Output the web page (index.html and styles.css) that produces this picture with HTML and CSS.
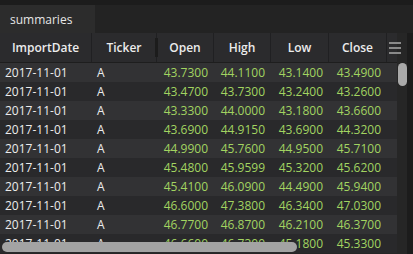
FILE: index.html
```html
<!DOCTYPE html>
<html lang="en">
<head>
    <meta charset="UTF-8">
    <title>summaries</title>
    <link rel="stylesheet" href="styles.css">
</head>
<body>
    <div class="app">
        <div class="tabbar">
            <div class="tab">summaries</div>
        </div>

        <div class="grid">
            <div class="row head">
                <div class="cell">ImportDate</div>
                <div class="cell">Ticker<span class="grip"></span></div>
                <div class="cell">Open</div>
                <div class="cell">High</div>
                <div class="cell">Low</div>
                <div class="cell">Close</div>
                <div class="menu"><span></span><span></span><span></span></div>
            </div>

            <div class="body">
                <div class="row"><div class="cell">2017-11-01</div><div class="cell">A</div><div class="cell num">43.7300</div><div class="cell num">44.1100</div><div class="cell num">43.1400</div><div class="cell num">43.4900</div></div>
                <div class="row"><div class="cell">2017-11-01</div><div class="cell">A</div><div class="cell num">43.4700</div><div class="cell num">43.7300</div><div class="cell num">43.2400</div><div class="cell num">43.2600</div></div>
                <div class="row"><div class="cell">2017-11-01</div><div class="cell">A</div><div class="cell num">43.3300</div><div class="cell num">44.0000</div><div class="cell num">43.1800</div><div class="cell num">43.6600</div></div>
                <div class="row"><div class="cell">2017-11-01</div><div class="cell">A</div><div class="cell num">43.6900</div><div class="cell num">44.9150</div><div class="cell num">43.6900</div><div class="cell num">44.3200</div></div>
                <div class="row"><div class="cell">2017-11-01</div><div class="cell">A</div><div class="cell num">44.9900</div><div class="cell num">45.7600</div><div class="cell num">44.9500</div><div class="cell num">45.7100</div></div>
                <div class="row"><div class="cell">2017-11-01</div><div class="cell">A</div><div class="cell num">45.4800</div><div class="cell num">45.9599</div><div class="cell num">45.3200</div><div class="cell num">45.6200</div></div>
                <div class="row"><div class="cell">2017-11-01</div><div class="cell">A</div><div class="cell num">45.4100</div><div class="cell num">46.0900</div><div class="cell num">44.4900</div><div class="cell num">45.9400</div></div>
                <div class="row"><div class="cell">2017-11-01</div><div class="cell">A</div><div class="cell num">46.6000</div><div class="cell num">47.3800</div><div class="cell num">46.3400</div><div class="cell num">47.0300</div></div>
                <div class="row"><div class="cell">2017-11-01</div><div class="cell">A</div><div class="cell num">46.7700</div><div class="cell num">46.8700</div><div class="cell num">46.2100</div><div class="cell num">46.3700</div></div>
                <div class="row"><div class="cell">2017-11-01</div><div class="cell">A</div><div class="cell num">46.6600</div><div class="cell num">46.7300</div><div class="cell num">45.1800</div><div class="cell num">45.3300</div></div>
            </div>

            <div class="vthumb"></div>
            <div class="hthumb"></div>
        </div>
    </div>
</body>
</html>
```

FILE: styles.css
```css
body {
    margin: 0;
    padding: 0;
    background: #1c1c1c;
    font-family: "Open Sans", "Noto Sans", sans-serif;
    font-size: 12px;
    font-weight: 500;
    color: #ececec;
    overflow: hidden;
}

.app {
    width: 413px;
    height: 254px;
    padding-top: 5px;
    box-sizing: border-box;
    overflow: hidden;
}

.tabbar {
    height: 28px;
    background: #232323;
    display: flex;
}

.tab {
    width: 95px;
    background: #2c2c2c;
    padding-left: 10px;
    box-sizing: border-box;
    display: flex;
    align-items: center;
    font-size: 12px;
    color: #e6e6e6;
}

.grid {
    position: relative;
    height: 221px;
    width: 407px;
    background: #262626;
    overflow: hidden;
}

.row {
    display: grid;
    grid-template-columns: 92px 65px 57px 57px 58px 58px;
    width: 397px;
    height: 19px;
    align-items: center;
}

.row .cell {
    padding: 0 5px;
    white-space: nowrap;
}

.row .num {
    text-align: right;
    padding-right: 6px;
    color: #a2d461;
}

.body .row:nth-child(odd) {
    background: #323234;
}

.body .row:nth-child(even) {
    background: #29292b;
}

.head {
    height: 29px;
    background: #2b2b2d;
    border-bottom: 1px solid #1e1e1e;
    grid-template-columns: 92px 65px 57px 57px 58px 58px 1fr;
    position: relative;
}

.head .cell {
    height: 100%;
    display: flex;
    align-items: center;
    justify-content: center;
    font-weight: 600;
    color: #ececec;
    border-right: 1px solid #202022;
    box-sizing: border-box;
    position: relative;
}

.grip {
    position: absolute;
    right: -2px;
    top: 5px;
    width: 3px;
    height: 19px;
    background: #1c1c1c;
}

.menu {
    display: flex;
    flex-direction: column;
    gap: 3px;
    padding-left: 2px;
}

.menu span {
    display: block;
    width: 12px;
    height: 2px;
    background: #8a8a8a;
}

.vthumb {
    position: absolute;
    left: 398px;
    top: 30px;
    width: 9px;
    height: 23px;
    border-radius: 5px;
    background: #a9a9a9;
}

.hthumb {
    position: absolute;
    left: 2px;
    top: 209px;
    width: 295px;
    height: 10px;
    border-radius: 5px;
    background: #a3a3a3;
}
```
